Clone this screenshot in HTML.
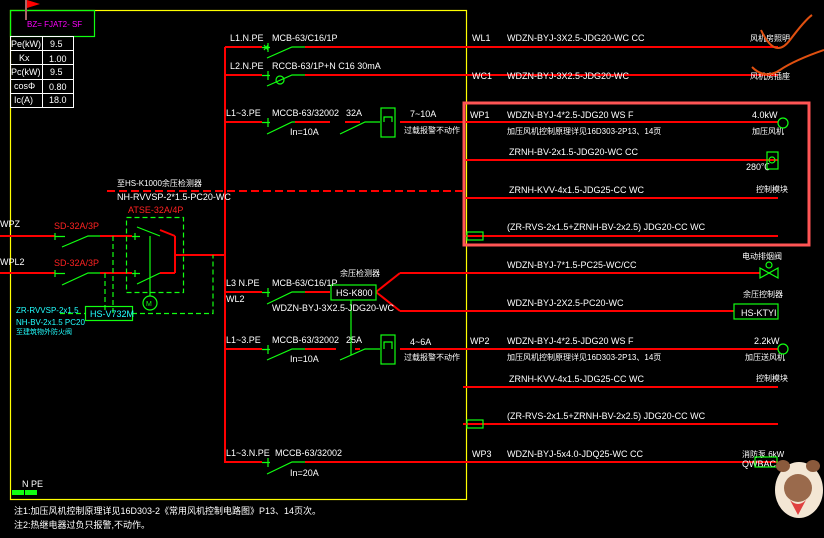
<!DOCTYPE html>
<html><head><meta charset="utf-8"><style>
html,body{margin:0;padding:0;background:#000;width:824px;height:538px;overflow:hidden}
svg{display:block}
text{font-family:"Liberation Sans","Noto Sans CJK SC",sans-serif;font-size:9px;fill:#fff}
.g{stroke:#1f1;fill:none;stroke-width:1.2}
.r{stroke:#ff0000;fill:none;stroke-width:2}
.gd{stroke:#1f1;fill:none;stroke-width:1.2;stroke-dasharray:5 3}
</style></head><body>
<svg width="824" height="538" viewBox="0 0 824 538">
<rect x="10.5" y="10.5" width="456" height="489" fill="none" stroke="#ff0" stroke-width="1.2"/>
<rect x="10.5" y="10.5" width="84" height="26" fill="none" stroke="#1f1" stroke-width="1.2"/>
<rect x="25" y="0" width="2" height="20" fill="#a66"/>
<polygon points="27,0 40,4 27,8" fill="#f00"/>
<text x="27" y="27" style="fill:#f0f;font-size:8px">BZ= FJAT2- SF</text>
<g stroke="#fff" fill="none"><rect x="10.5" y="36.5" width="63" height="71"/>
<path d="M10 50.5H73M10 64.5H73M10 79.5H73M10 93.5H73M42.5 36V107"/></g>
<text x="11" y="47">Pe(kW)</text><text x="50" y="47">9.5</text>
<text x="19" y="61">Kx</text><text x="49" y="62">1.00</text>
<text x="11" y="75">Pc(kW)</text><text x="50" y="75">9.5</text>
<text x="14" y="89">cosΦ</text><text x="49" y="90">0.80</text>
<text x="14" y="103">Ic(A)</text><text x="49" y="103">18.0</text>

<!-- bus -->
<path class="r" d="M225 47V463"/>
<path class="r" d="M225 47H262M305 47H778M225 75H262M305 75H778M225 122H262M295 122H330M345 122H360M400 122H778"/>
<path class="r" d="M463 160H778M463 198H778M463 236H778"/>
<path class="r" d="M225 292H262M305 292H330M225 349H262M305 349H336M355 349H360M400 349H778M225 462H262M305 462H778"/>
<path class="r" d="M400 273H760M400 311H734M463 387H778M463 424H778"/>
<path class="r" d="M376 292L400 273M376 292L400 311" stroke-width="1.3"/>
<!-- breakers -->
<g class="g">
<path d="M262 47.5H270M268 43V52M264 45L268 50M264 50L268 45M267 58L292 47H305"/>
<path d="M262 75.5H270M268 71V80M267 86L292 75H305"/><circle cx="280" cy="80" r="4"/>
<path d="M262 122.5H270M268 118V127M267 134L292 122H295M340 134L365 122H380"/>
<rect x="381" y="108" width="14" height="29"/><path d="M384 122V117H392V122"/>
<path d="M262 292.5H270M268 288V297M267 304L292 292H305"/>
<rect x="331" y="285" width="45" height="15"/>
<path d="M262 349.5H270M268 345V354M267 360L292 349H305M340 360L365 349H380M351 300V355"/>
<rect x="381" y="335" width="14" height="29"/><path d="M384 349V342H392V349"/>
<path d="M262 462.5H270M268 458V467M267 474L292 462H305"/>
</g>
<text x="230" y="41">L1.N.PE</text><text x="272" y="41">MCB-63/C16/1P</text>
<text x="230" y="69">L2.N.PE</text><text x="272" y="69">RCCB-63/1P+N C16 30mA</text>
<text x="226" y="116">L1~3.PE</text><text x="272" y="116">MCCB-63/32002</text><text x="346" y="116">32A</text>
<text x="290" y="135">In=10A</text><text x="410" y="117">7~10A</text><text x="404" y="133" style="font-size:8px">过载报警不动作</text>
<text x="226" y="286">L3 N.PE</text><text x="226" y="302">WL2</text><text x="272" y="286">MCB-63/C16/1P</text>
<text x="272" y="311">WDZN-BYJ-3X2.5-JDG20-WC</text><text x="340" y="276" style="font-size:8px">余压检测器</text>
<text x="336" y="296">HS-K800</text>
<text x="226" y="343">L1~3.PE</text><text x="272" y="343">MCCB-63/32002</text><text x="346" y="343">25A</text>
<text x="290" y="362">In=10A</text><text x="410" y="345">4~6A</text><text x="404" y="360" style="font-size:8px">过载报警不动作</text>
<text x="226" y="456">L1~3.N.PE</text><text x="275" y="456">MCCB-63/32002</text><text x="290" y="476">In=20A</text>

<!-- right labels -->
<text x="472" y="41">WL1</text><text x="507" y="41">WDZN-BYJ-3X2.5-JDG20-WC CC</text><text x="750" y="41" style="font-size:8px">风机房照明</text>
<text x="472" y="79">WC1</text><text x="507" y="79">WDZN-BYJ-3X2.5-JDG20-WC</text><text x="750" y="79" style="font-size:8px">风机房插座</text>
<text x="470" y="118">WP1</text><text x="507" y="118">WDZN-BYJ-4*2.5-JDG20 WS F</text><text x="752" y="118">4.0kW</text>
<text x="507" y="134" style="font-size:8px">加压风机控制原理详见16D303-2P13、14页</text><text x="752" y="134" style="font-size:8px">加压风机</text>
<text x="509" y="155">ZRNH-BV-2x1.5-JDG20-WC CC</text><text x="746" y="170">280℃</text>
<text x="509" y="193">ZRNH-KVV-4x1.5-JDG25-CC WC</text><text x="756" y="192" style="font-size:8px">控制模块</text>
<text x="507" y="230">(ZR-RVS-2x1.5+ZRNH-BV-2x2.5) JDG20-CC WC</text>
<text x="507" y="268">WDZN-BYJ-7*1.5-PC25-WC/CC</text><text x="742" y="259" style="font-size:8px">电动排烟阀</text>
<text x="507" y="306">WDZN-BYJ-2X2.5-PC20-WC</text><text x="743" y="297" style="font-size:8px">余压控制器</text>
<text x="470" y="344">WP2</text><text x="507" y="344">WDZN-BYJ-4*2.5-JDG20 WS F</text><text x="754" y="344">2.2kW</text>
<text x="507" y="360" style="font-size:8px">加压风机控制原理详见16D303-2P13、14页</text><text x="745" y="360" style="font-size:8px">加压送风机</text>
<text x="509" y="382">ZRNH-KVV-4x1.5-JDG25-CC WC</text><text x="756" y="381" style="font-size:8px">控制模块</text>
<text x="507" y="419">(ZR-RVS-2x1.5+ZRNH-BV-2x2.5) JDG20-CC WC</text>
<text x="472" y="457">WP3</text><text x="507" y="457">WDZN-BYJ-5x4.0-JDQ25-WC CC</text><text x="742" y="457" style="font-size:8px">消防泵 6kW</text>
<text x="742" y="467">QWBAC</text>
<g class="g"><circle cx="783" cy="123" r="5"/><rect x="767" y="152" width="11" height="17"/><circle cx="772" cy="160" r="3"/>
<rect x="467" y="232" width="16" height="8"/><circle cx="769" cy="265" r="3"/><path d="M760 268L778 278V268L760 278Z"/>
<rect x="734" y="304" width="44" height="15"/><circle cx="783" cy="349" r="5"/><rect x="467" y="420" width="16" height="8"/><rect x="755" y="457" width="22" height="10"/></g>
<text x="741" y="316">HS-KTYI</text>
<rect x="464" y="103" width="345" height="142" fill="none" stroke="#f55" stroke-width="3"/>
<path d="M761 30Q775 60 790 40T812 15M752 67Q765 80 780 70T824 50" fill="none" stroke="#e05010" stroke-width="2"/>

<!-- left -->
<path class="r" d="M107 191H466" stroke-dasharray="8 4"/>
<text x="117" y="186" style="font-size:8px">至HS-K1000余压检测器</text><text x="117" y="200">NH-RVVSP-2*1.5-PC20-WC</text>
<text x="128" y="213" style="fill:#f22">ATSE-32A/4P</text>
<text x="54" y="229" style="fill:#f22">SD-32A/3P</text><text x="54" y="266" style="fill:#f22">SD-32A/3P</text>
<text x="0" y="227">WPZ</text><text x="0" y="265">WPL2</text>
<path class="r" d="M0 236H55M100 236H132M0 273H55M100 273H132M175 255H225M175 236V273M160 230L175 236M160 273L175 273"/>
<path class="g" d="M55 233V240M55 236.5H65M62 247L88 236H100M55 270V277M55 273.5H65M62 285L88 273H100M132 236.5H140M135 233V240M132 273.5H140M135 270V277M137 227L160 236M137 284L160 273M150 236V296"/>
<rect x="126.5" y="217.5" width="57" height="75" class="gd"/>
<circle cx="150" cy="303" r="7" class="g"/><text x="146" y="306" style="fill:#1f1;font-size:7px">M</text>
<path class="gd" d="M113 236V313M105 273V313M60 313.5H85M132 313.5H213V255"/>
<rect x="85.5" y="306.5" width="47" height="14" class="g"/><text x="90" y="317" style="fill:#2ff">HS-V732M</text>
<text x="16" y="313" style="fill:#2ff;font-size:8px">ZR-RVVSP-2x1.5</text><text x="16" y="325" style="fill:#2ff;font-size:8px">NH-BV-2x1.5 PC20</text>
<text x="16" y="334" style="fill:#2ff;font-size:7px">至建筑物外防火阀</text>
<text x="22" y="487">N  PE</text>
<rect x="12" y="490" width="12" height="5" fill="#1f1"/><rect x="25" y="490" width="12" height="5" fill="#1f1"/>
<text x="14" y="514">注1:加压风机控制原理详见16D303-2《常用风机控制电路图》P13、14页次。</text>
<text x="14" y="528">注2:热继电器过负只报警,不动作。</text>
<!-- bear -->
<ellipse cx="799" cy="490" rx="24" ry="28" fill="#f3e6d4"/>
<ellipse cx="783" cy="466" rx="7" ry="6" fill="#8a5a3c"/><ellipse cx="813" cy="466" rx="7" ry="6" fill="#8a5a3c"/>
<ellipse cx="798" cy="488" rx="14" ry="14" fill="#9a6a4c"/>
<path d="M790 500Q798 508 806 500L798 515Z" fill="#e04040"/>
</svg>
</body></html>
